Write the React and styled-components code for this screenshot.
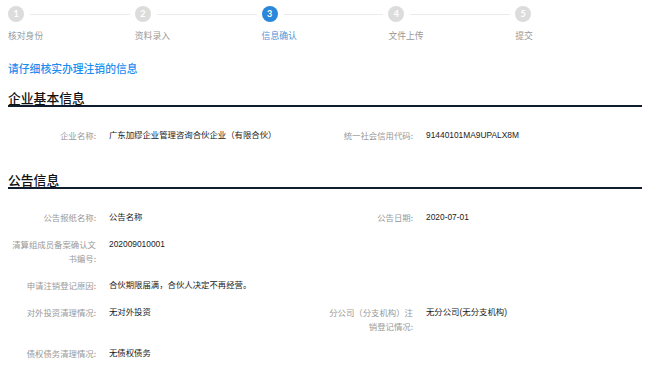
import React from "react";
import styled, { createGlobalStyle } from "styled-components";

const GlobalStyle = createGlobalStyle`
  html, body {
    margin: 0;
    padding: 0;
    background: #fff;
  }
  body {
    font-family: "Noto Sans CJK SC", "Liberation Sans", sans-serif;
    color: #333;
  }
`;

const steps = ["核对身份", "资料录入", "信息确认", "文件上传", "提交"];
const current = 2;

const basicInfo = [
  { label: "企业名称:", value: "广东加缪企业管理咨询合伙企业（有限合伙）" },
  { label: "统一社会信用代码:", value: "91440101MA9UPALX8M" },
];

const noticeInfo = [
  { label: "公告报纸名称:", value: "公告名称" },
  { label: "公告日期:", value: "2020-07-01" },
  { label: "清算组成员备案确认文书编号:", value: "202009010001" },
  { label: "申请注销登记原因:", value: "合伙期限届满，合伙人决定不再经营。", wide: true },
  { label: "对外投资清理情况:", value: "无对外投资" },
  { label: "分公司（分支机构）注销登记情况:", value: "无分公司(无分支机构)" },
  { label: "债权债务清理情况:", value: "无债权债务" },
];

const App = () => {
  return (
    <>
      <GlobalStyle />
      <Page>
        <Stepper>
          {steps.map((s, i) => (
            <Step key={s}>
              <StepHead>
                <Circle active={i === current}>{i + 1}</Circle>
                {i < steps.length - 1 && <Connector />}
              </StepHead>
              <StepLabel active={i === current}>{s}</StepLabel>
            </Step>
          ))}
        </Stepper>

        <Notice>请仔细核实办理注销的信息</Notice>

        <Section>
          <SectionTitle>企业基本信息</SectionTitle>
          <InfoGrid>
            {basicInfo.map((f) => (
              <Field key={f.label}>
                <Label>{f.label}</Label>
                <Value>{f.value}</Value>
              </Field>
            ))}
          </InfoGrid>
        </Section>

        <Section>
          <SectionTitle>公告信息</SectionTitle>
          <InfoGrid>
            {noticeInfo.map((f) => (
              <Field key={f.label} wide={f.wide}>
                <Label>{f.label}</Label>
                <Value>{f.value}</Value>
              </Field>
            ))}
          </InfoGrid>
        </Section>
      </Page>
    </>
  );
};

export default App;

const Page = styled.div`
  padding: 6px 8px 0 8px;
  width: 634px;
`;

const Stepper = styled.div`
  display: flex;
`;

const Step = styled.div`
  width: 127px;
  display: flex;
  flex-direction: column;
`;

const StepHead = styled.div`
  display: flex;
  align-items: center;
  height: 16px;
`;

const Circle = styled.div`
  width: 16px;
  height: 16px;
  flex: none;
  border-radius: 50%;
  background: ${(p) => (p.active ? "#2b87d9" : "#dcdcdc")};
  color: #fff;
  font-family: "Lato", "Liberation Sans", sans-serif;
  font-weight: 700;
  font-size: 9px;
  line-height: 16px;
  text-align: center;
`;

const Connector = styled.div`
  flex: 1;
  height: 1px;
  margin: 0 5px 0 6px;
  background: #ebebeb;
`;

const StepLabel = styled.div`
  margin-top: 8px;
  font-size: 8.8px;
  line-height: 12px;
  color: ${(p) => (p.active ? "#4f93d8" : "#999")};
`;

const Notice = styled.div`
  margin-top: 19px;
  font-size: 10.8px;
  line-height: 14px;
  font-weight: 500;
  color: #1c8cf0;
`;

const Section = styled.div`
  margin-top: 16px;

  & + & {
    margin-top: 31px;
  }
`;

const SectionTitle = styled.div`
  font-size: 12.8px;
  line-height: 14px;
  font-weight: 500;
  color: #111;
  border-bottom: 2px solid #0e1c2b;
`;

const InfoGrid = styled.div`
  display: grid;
  grid-template-columns: 317px 317px;
  row-gap: 13px;
  margin-top: 21px;
`;

const Field = styled.div`
  display: flex;
  align-items: flex-start;
  grid-column: ${(p) => (p.wide ? "span 2" : "auto")};
`;

const Label = styled.div`
  width: 88px;
  flex: none;
  text-align: right;
  font-size: 8.4px;
  line-height: 14px;
  color: #999;
`;

const Value = styled.div`
  padding-left: 13px;
  font-family: "Liberation Sans", "Noto Sans CJK SC", sans-serif;
  font-size: 8.4px;
  line-height: 14px;
  color: #222;
`;
